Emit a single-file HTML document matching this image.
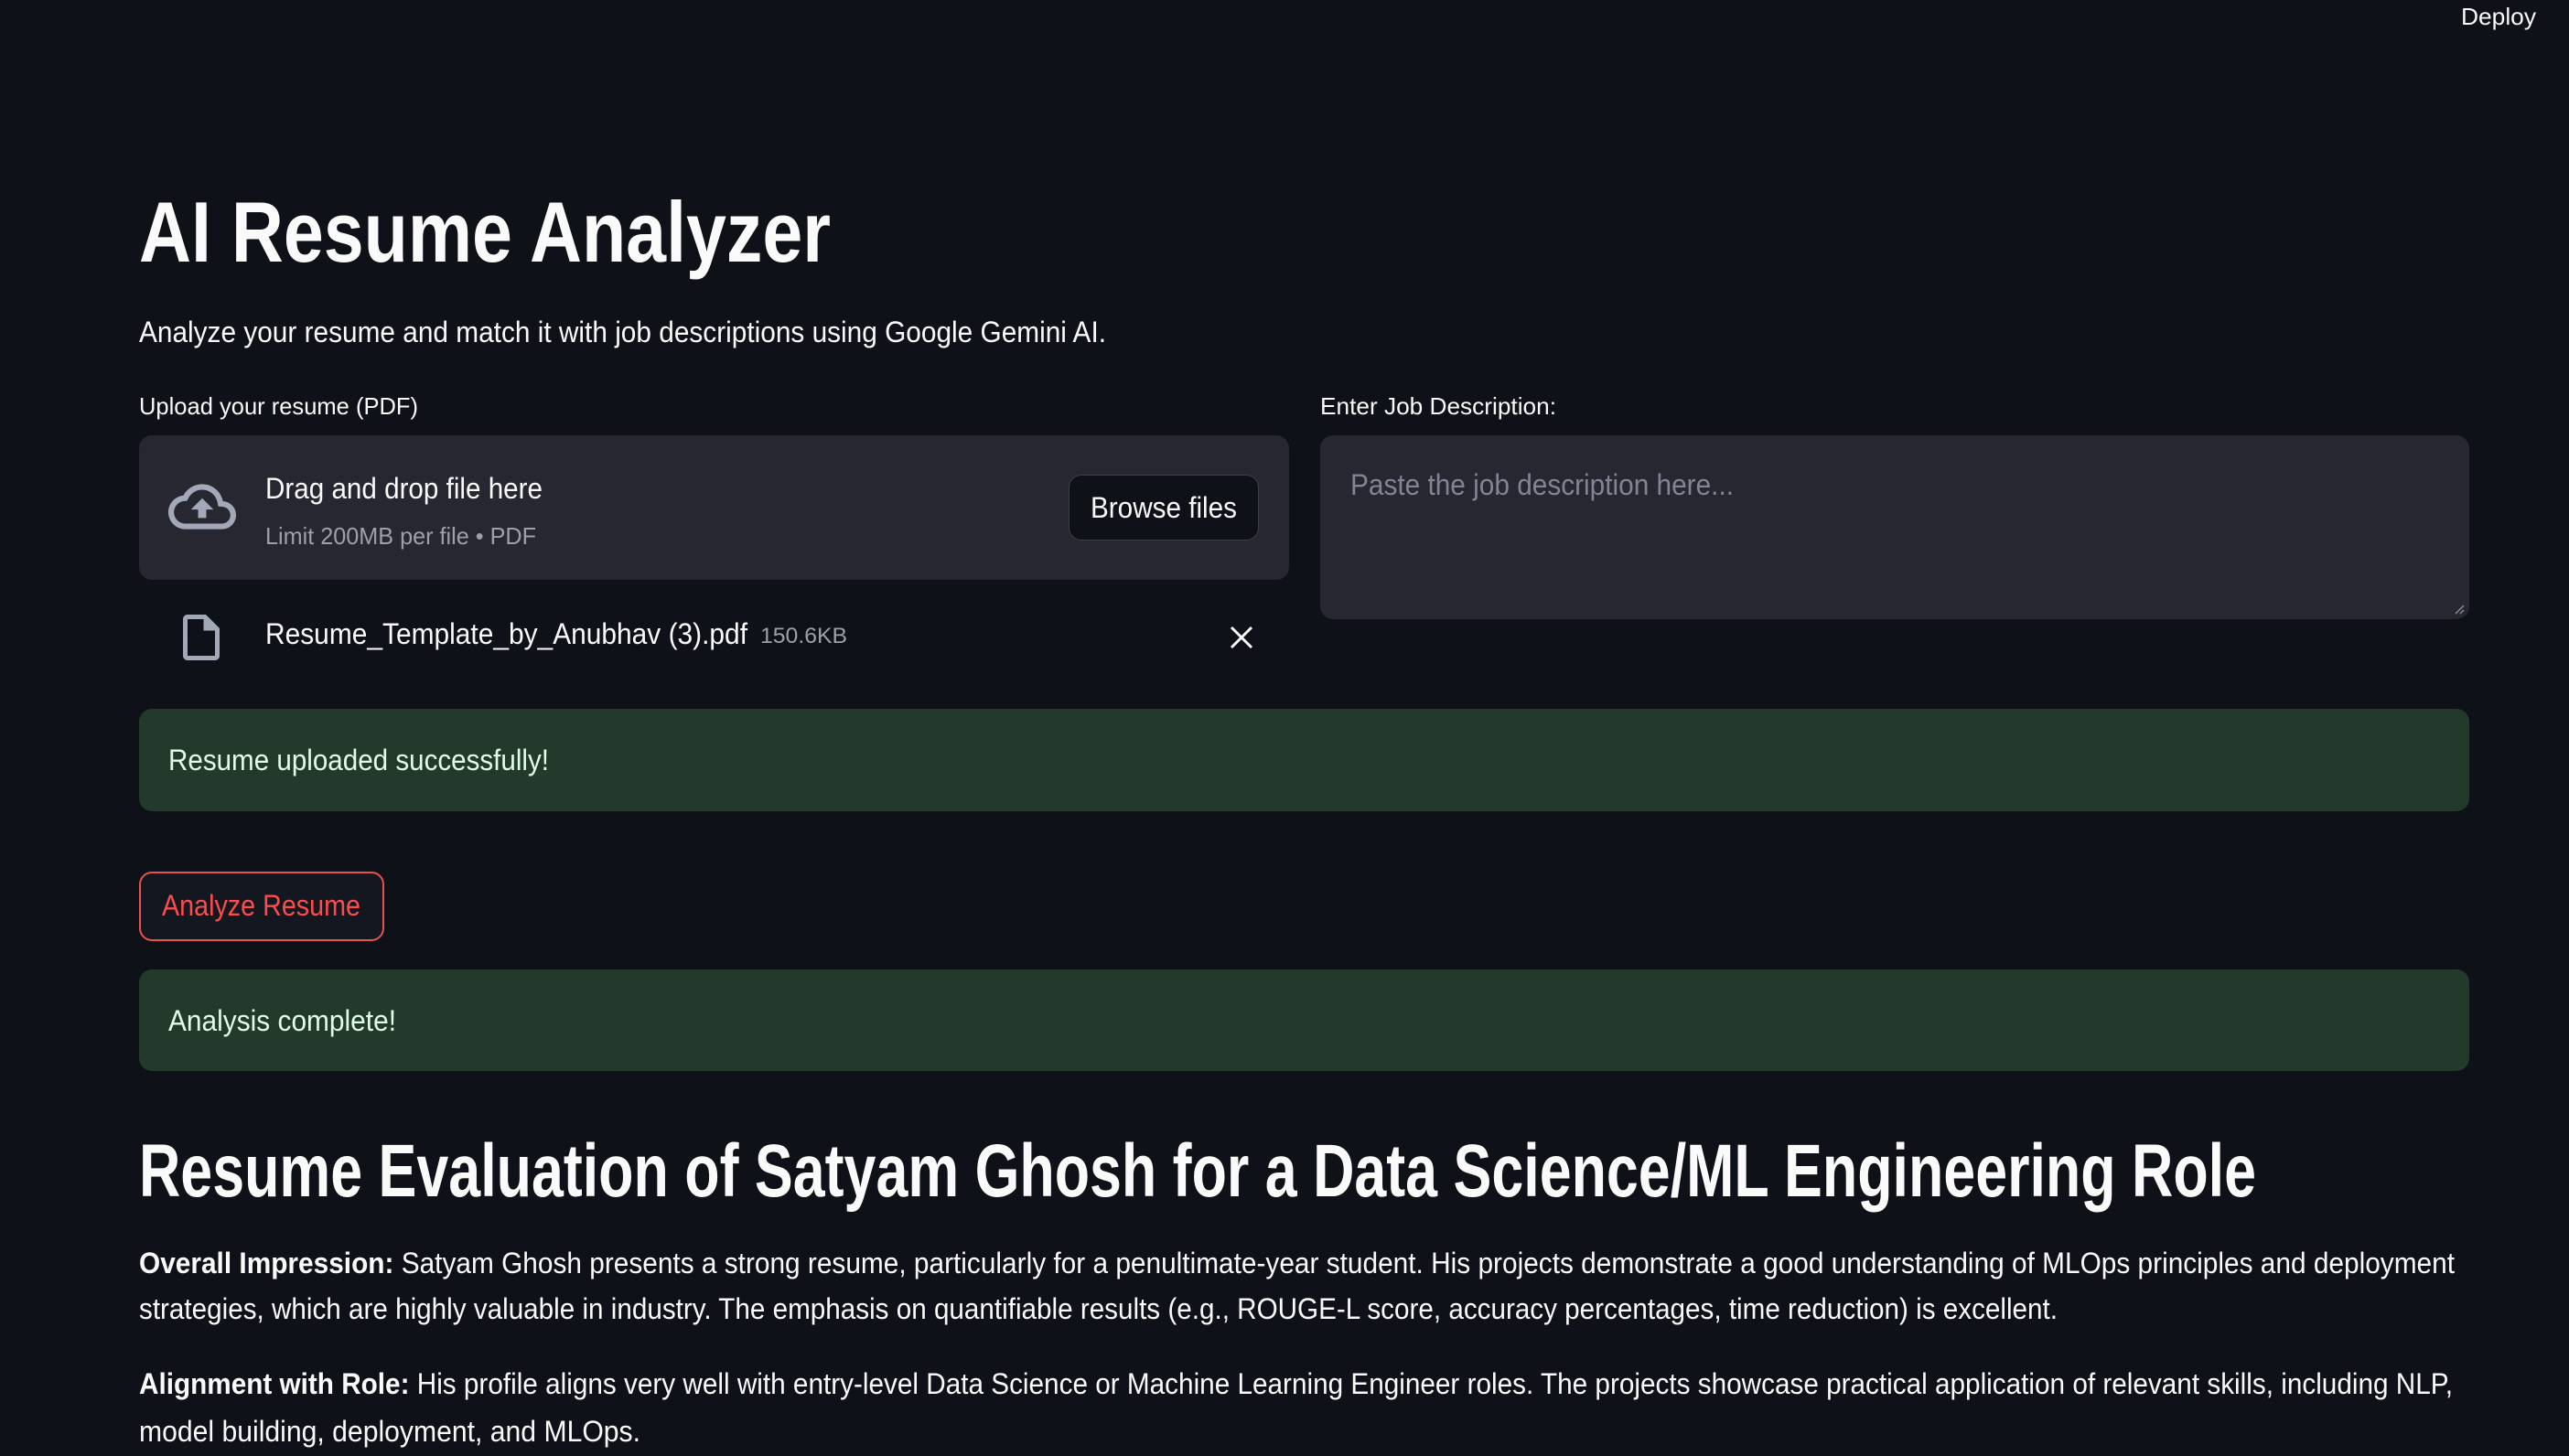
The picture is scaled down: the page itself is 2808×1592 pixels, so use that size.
<!DOCTYPE html>
<html><head><meta charset="utf-8">
<style>
html,body{margin:0;padding:0;background:#0e1117;width:2808px;height:1592px;overflow:hidden;font-family:"Liberation Sans",sans-serif;color:#fafafa}
.t{position:absolute;line-height:1;white-space:nowrap}
.t>span{display:inline-block;transform-origin:0 50%;white-space:nowrap}
.box{position:absolute}
</style></head><body>
<div class="t" style="left:2690px;top:5px;font-size:26px;width:82px"><span>Deploy</span></div>
<div class="t" style="left:152px;top:207px;font-size:94px;font-weight:bold;width:756px"><span>AI Resume Analyzer</span></div>
<div class="t" style="left:152px;top:347px;font-size:32px;width:1057px"><span>Analyze your resume and match it with job descriptions using Google Gemini AI.</span></div>
<div class="t" style="left:152px;top:431px;font-size:26px;width:305px"><span>Upload your resume (PDF)</span></div>
<div class="t" style="left:1443px;top:431px;font-size:26px;width:258px"><span>Enter Job Description:</span></div>

<div class="box" style="left:152px;top:476px;width:1257px;height:158px;background:#262730;border-radius:14px"></div>
<svg class="box" style="left:184px;top:523px" width="74" height="62" viewBox="0 2 24 20"><path fill="#a3a8b8" d="M19.35 10.04C18.67 6.59 15.64 4 12 4 9.11 4 6.6 5.64 5.350 8.04 2.34 8.36 0 10.91 0 14c0 3.31 2.690 6 6 6h13c2.76 0 5-2.24 5-5 0-2.64-2.05-4.78-4.65-4.96zM19 18H6c-2.21 0-4-1.79-4-4 0-2.05 1.53-3.760 3.56-3.97l1.07-.11.5-.95C8.08 7.140 9.94 6 12 6c2.62 0 4.88 1.86 5.39 4.43l.3 1.5 1.53.11c1.56.1 2.78 1.41 2.78 2.96 0 1.65-1.35 3-3 3zM8 13h2.55v3h2.9v-3H16l-4-4z"/></svg>
<div class="t" style="left:290px;top:518px;font-size:32px;width:303px"><span>Drag and drop file here</span></div>
<div class="t" style="left:290px;top:573px;font-size:26px;width:296px;color:#9ea0a8"><span>Limit 200MB per file • PDF</span></div>
<div class="box" style="left:1168px;top:519px;width:206px;height:70px;background:#0e1117;border:1.5px solid #3d3f48;border-radius:14px"></div>
<div class="t" style="left:1192px;top:539px;font-size:32px;width:160px"><span>Browse files</span></div>

<svg class="box" style="left:190px;top:667px" width="60" height="60" viewBox="0 0 24 24"><path fill="#a3a8b8" d="M14 2H6c-1.1 0-1.99.9-1.99 2L4 20c0 1.1.89 2 1.99 2H18c1.1 0 2-.9 2-2V8l-6-6zM6 20V4h7v5h5v11H6z"/></svg>
<div class="t" style="left:290px;top:677px;font-size:32px;width:527px"><span>Resume_Template_by_Anubhav (3).pdf</span></div>
<div class="t" style="left:831px;top:684px;font-size:24px;width:95px;color:#9ea0a8"><span>150.6KB</span></div>
<svg class="box" style="left:1343px;top:683px" width="28" height="28" viewBox="0 0 28 28"><path d="M3 3L25 25M25 3L3 25" stroke="#fafafa" stroke-width="3"/></svg>

<div class="box" style="left:1443px;top:476px;width:1256px;height:201px;background:#262730;border-radius:14px"></div>
<div class="t" style="left:1476px;top:514px;font-size:32px;width:419px;color:#808495"><span>Paste the job description here...</span></div>
<svg class="box" style="left:2682px;top:660px" width="12" height="12" viewBox="0 0 12 12"><path d="M11 2L2 11M11 7L7 11" stroke="#8a8c95" stroke-width="1.5"/></svg>

<div class="box" style="left:152px;top:775px;width:2547px;height:112px;background:#23392b;border-radius:14px"></div>
<div class="t" style="left:184px;top:815px;font-size:32px;width:416px;color:#dffde9"><span>Resume uploaded successfully!</span></div>

<div class="box" style="left:152px;top:953px;width:264px;height:72px;background:#131720;border:2px solid #e8514f;border-radius:14px"></div>
<div class="t" style="left:177px;top:974px;font-size:32px;width:217px;color:#ff4b4b"><span>Analyze Resume</span></div>

<div class="box" style="left:152px;top:1060px;width:2547px;height:111px;background:#23392b;border-radius:14px"></div>
<div class="t" style="left:184px;top:1100px;font-size:32px;width:249px;color:#dffde9"><span>Analysis complete!</span></div>

<div class="t" style="left:152px;top:1240px;font-size:82px;font-weight:bold;width:2314px"><span>Resume Evaluation of Satyam Ghosh for a Data Science/ML Engineering Role</span></div>
<div class="t" style="left:152px;top:1365px;font-size:32px;width:2531px"><span><b>Overall Impression:</b> Satyam Ghosh presents a strong resume, particularly for a penultimate-year student. His projects demonstrate a good understanding of MLOps principles and deployment</span></div>
<div class="t" style="left:152px;top:1415px;font-size:32px;width:2097px"><span>strategies, which are highly valuable in industry. The emphasis on quantifiable results (e.g., ROUGE-L score, accuracy percentages, time reduction) is excellent.</span></div>
<div class="t" style="left:152px;top:1497px;font-size:32px;width:2529px"><span><b>Alignment with Role:</b> His profile aligns very well with entry-level Data Science or Machine Learning Engineer roles. The projects showcase practical application of relevant skills, including NLP,</span></div>
<div class="t" style="left:152px;top:1549px;font-size:32px;width:548px"><span>model building, deployment, and MLOps.</span></div>

<script>
document.querySelectorAll('.t').forEach(function(d){
  var s=d.firstElementChild, w=parseFloat(d.style.width), sw=s.getBoundingClientRect().width;
  if(sw>0) s.style.transform='scaleX('+(w/sw)+')';
});
</script>
</body></html>
